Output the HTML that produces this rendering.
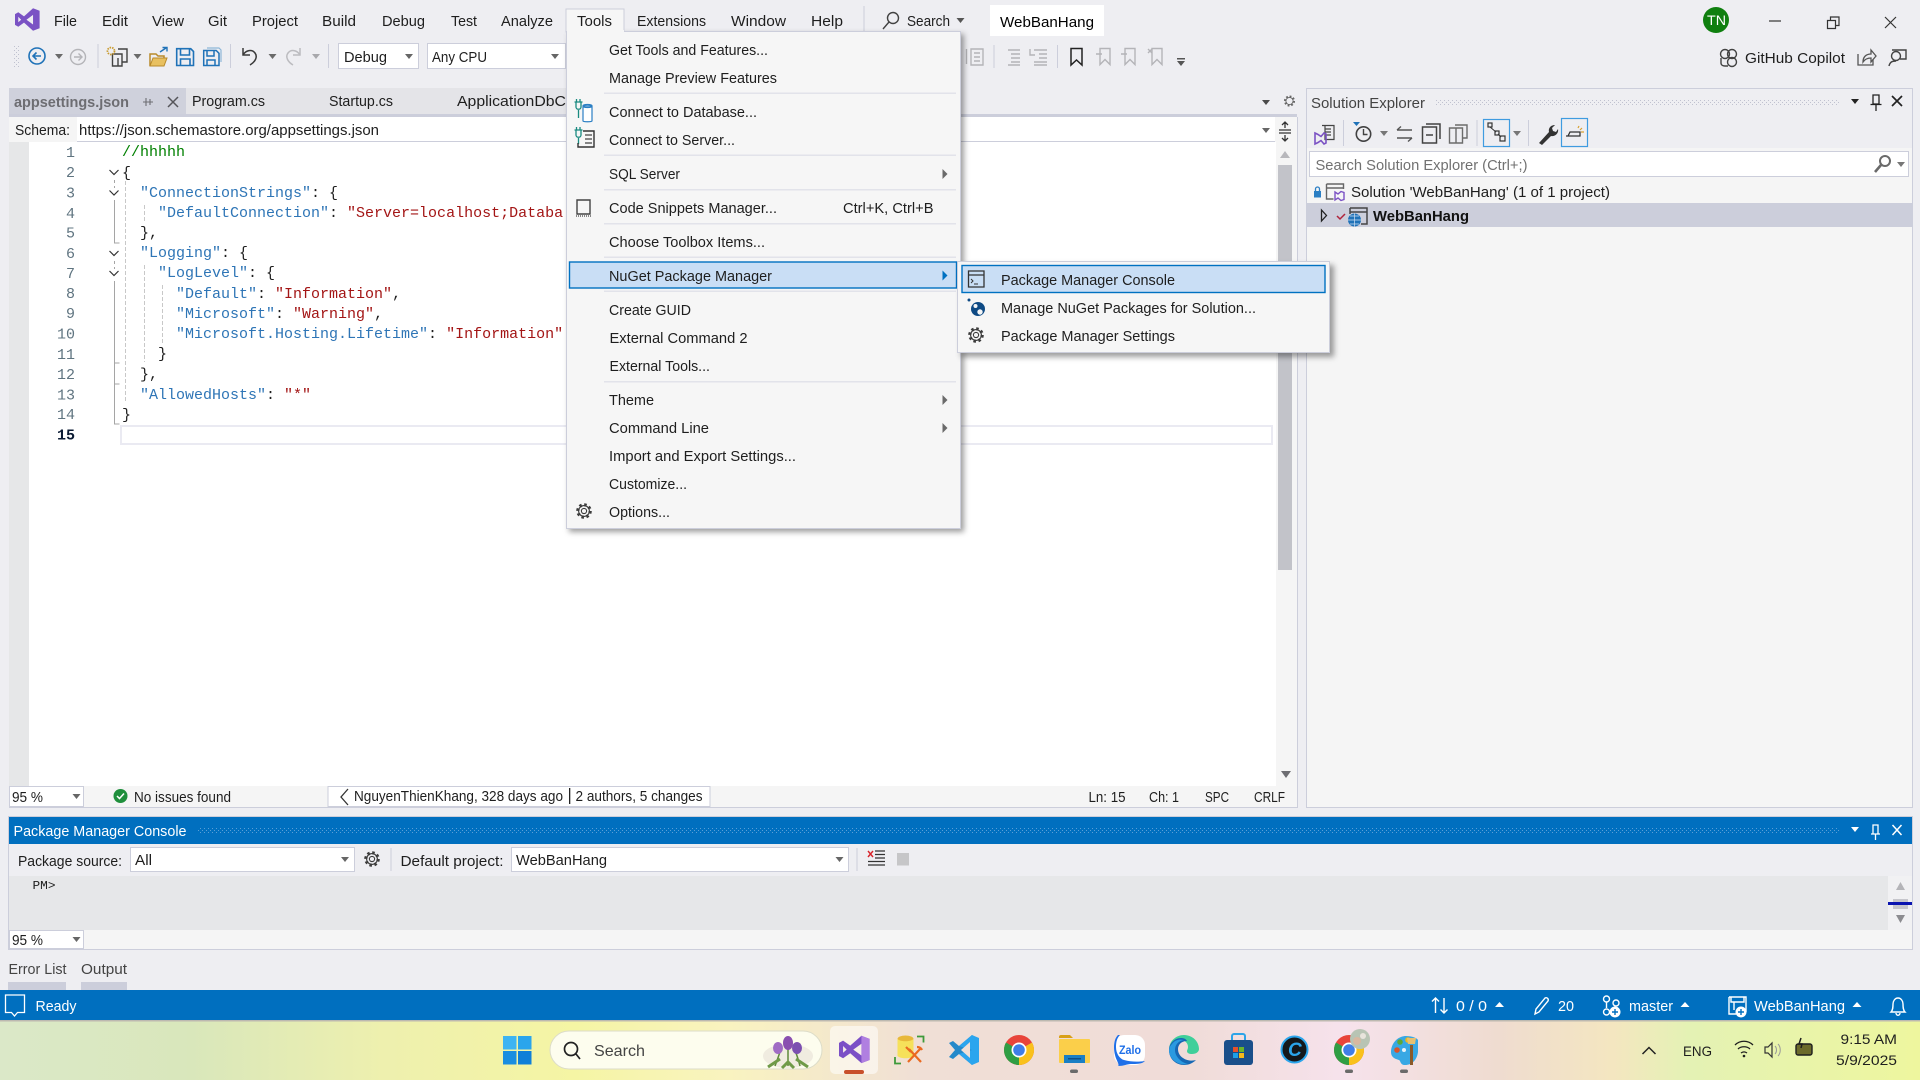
<!DOCTYPE html>
<html><head><meta charset="utf-8"><title>WebBanHang</title>
<style>
html,body{margin:0;padding:0;background:#eeeef2;overflow:hidden}
svg{display:block}
text{font-family:"Liberation Sans",sans-serif;font-size:15px;fill:#1e1e1e;white-space:pre}
.m{font-family:"Liberation Mono",monospace;font-size:15px;fill:#1e1e1e}
.k{fill:#2e75b6}.s{fill:#a31515}.ln{font-family:"Liberation Mono",monospace;font-size:15px;fill:#5f7480;text-anchor:end}
.w{fill:#fff}.g{fill:#444}
.ic{fill:none;stroke:#424242;stroke-width:1.4}
.ig{fill:none;stroke:#b4b4b8;stroke-width:1.4}
.ib{fill:none;stroke:#1f72b8;stroke-width:1.6}
.sep{stroke:#cccedb;stroke-width:1}
.iw{fill:none;stroke:#fff;stroke-width:1.4}
</style></head><body>
<svg xmlns="http://www.w3.org/2000/svg" width="1920" height="1080" viewBox="0 0 1920 1080">
<defs>
<path id="c" d="M-4 -2h8l-4 5z"/>
<path id="r" d="M-2.5 -5v10l5-5z"/>
<g id="gear"><circle r="6.2" fill="none" stroke="#3c3c3c" stroke-width="3.2" stroke-dasharray="2.4 2.47"/><circle r="5.4" fill="none" stroke="#3c3c3c" stroke-width="1.1"/><circle r="2.6" fill="none" stroke="#3c3c3c" stroke-width="1.1"/></g>
<pattern id="gr" width="4" height="4" patternUnits="userSpaceOnUse"><rect width="1" height="1" fill="#bfc1cf"/><rect x="2" y="2" width="1" height="1" fill="#bfc1cf"/></pattern>
<pattern id="grw" width="4" height="4" patternUnits="userSpaceOnUse"><rect width="1" height="1" fill="#5a9fd6"/><rect x="2" y="2" width="1" height="1" fill="#5a9fd6"/></pattern>
<linearGradient id="tb" x1="0" x2="1" y1="0" y2="0">
<stop offset="0" stop-color="#dbe8c8"/><stop offset=".1" stop-color="#d9e7bb"/><stop offset=".2" stop-color="#eef0ae"/><stop offset=".3" stop-color="#f5f5a4"/><stop offset=".38" stop-color="#f9f3c0"/><stop offset=".48" stop-color="#f0dfd6"/><stop offset=".62" stop-color="#f0dcd8"/><stop offset=".7" stop-color="#f6e2ec"/><stop offset=".78" stop-color="#efdcd0"/><stop offset=".84" stop-color="#f4e6c0"/><stop offset=".88" stop-color="#e4f2b4"/><stop offset="1" stop-color="#eef69e"/>
</linearGradient>
<filter id="sh" x="-10%" y="-10%" width="120%" height="120%"><feGaussianBlur stdDeviation="3"/></filter>
</defs>

<rect width="1920" height="1080" fill="#eeeef2"/>

<!-- title menu bar -->
<g transform="translate(15,6) scale(.82,.74)"><path d="M0 11 L4 8.500 L11 14 L22 3 L30 6.500 V30 L22 33.500 L11 22.500 L4 28 L0 25.500Z" fill="#7a52c4"/><path d="M22 12 V25 L14 18.500Z M4 14.500 V22 L7.500 18.500Z" fill="#eeeef2"/></g>
<text x="54" y="26" textLength="23" lengthAdjust="spacingAndGlyphs">File</text>
<text x="102" y="26" textLength="26" lengthAdjust="spacingAndGlyphs">Edit</text>
<text x="152" y="26" textLength="32" lengthAdjust="spacingAndGlyphs">View</text>
<text x="208" y="26" textLength="19" lengthAdjust="spacingAndGlyphs">Git</text>
<text x="252" y="26" textLength="46" lengthAdjust="spacingAndGlyphs">Project</text>
<text x="322" y="26" textLength="34" lengthAdjust="spacingAndGlyphs">Build</text>
<text x="382" y="26" textLength="43" lengthAdjust="spacingAndGlyphs">Debug</text>
<text x="451" y="26" textLength="26" lengthAdjust="spacingAndGlyphs">Test</text>
<text x="501" y="26" textLength="52" lengthAdjust="spacingAndGlyphs">Analyze</text>
<text x="637" y="26" textLength="69" lengthAdjust="spacingAndGlyphs">Extensions</text>
<text x="731" y="26" textLength="55" lengthAdjust="spacingAndGlyphs">Window</text>
<text x="811" y="26" textLength="32" lengthAdjust="spacingAndGlyphs">Help</text>
<line x1="864" y1="6" x2="864" y2="32" class="sep"/>
<circle cx="893" cy="18" r="5.500" class="ic"/><path d="M889 22l-6 7" class="ic"/>
<text x="907" y="26" textLength="43" lengthAdjust="spacingAndGlyphs">Search</text>
<use href="#c" x="960.500" y="20" fill="#555"/>
<rect x="990" y="5" width="114" height="31" fill="#fff"/>
<text x="1000" y="27" textLength="94" lengthAdjust="spacingAndGlyphs" style="fill:#000">WebBanHang</text>
<circle cx="1716" cy="20" r="13" fill="#0f7f0f"/>
<text x="1707" y="25" textLength="19" lengthAdjust="spacingAndGlyphs" class="w" style="font-size:14px">TN</text>
<path d="M1769 21h12" stroke="#333" stroke-width="1.2"/>
<path d="M1827.500 20.500h8v8h-8zM1830.500 20v-3h8.500v8.500h-3" fill="none" stroke="#333" stroke-width="1.2"/>
<path d="M1885 17l11 11M1896 17l-11 11" stroke="#333" stroke-width="1.2"/>

<!-- toolbar -->
<rect x="14" y="46" width="6" height="21" fill="url(#gr)"/>
<circle cx="37" cy="56" r="8" class="ib"/><path d="M41 56h-8m3.500-3.500L33 56l3.500 3.500" class="ib"/>
<use href="#c" x="59" y="56" fill="#6a6a6a"/>
<circle cx="78" cy="57" r="7.500" class="ig"/><path d="M74 57h8m-3.500-3.500L82 57l-3.500 3.500" class="ig"/>
<line x1="98" y1="44" x2="98" y2="68" class="sep"/>
<path d="M118 49h9v13h-5" class="ic"/><path d="M112.500 54h9.500v12h-9.500z" class="ic"/><path d="M118 58v8" class="ic"/>
<circle cx="111" cy="51" r="3.500" fill="none" stroke="#c99a2e" stroke-width="1.800" stroke-dasharray="1.500 1"/>
<use href="#c" x="137.500" y="56" fill="#6a6a6a"/>
<path d="M150 66V54h6l2 2h6v3" fill="none" stroke="#b98a2a" stroke-width="1.500"/><path d="M150 66l3-8h14l-3 8z" fill="#e8c060" stroke="#b98a2a" stroke-width="1"/>
<path d="M160 52l6-4m-3.500-.5H167v4" fill="none" stroke="#1f72b8" stroke-width="1.400"/>
<path d="M176.700 48.700h14l2.800 2.800v14h-16.800zM180.500 49v6h9v-6M180.500 65v-6h9.500v6" fill="none" stroke="#1f72b8" stroke-width="1.600"/>
<path d="M203.700 50.500h12.500l2.800 2.800v12.200H203.700zM207 51v5h7v-5M207 65v-5h8v5" fill="none" stroke="#1f72b8" stroke-width="1.500"/><path d="M207 48h12l2 2v12" fill="none" stroke="#8fb7d8" stroke-width="1.200"/>
<line x1="230.500" y1="44" x2="230.500" y2="68" class="sep"/>
<path d="M243 48v7h7M243 55c3-5 9-6 12-2 3 4 0 9-5 12" fill="none" stroke="#3a3a3a" stroke-width="1.500"/>
<use href="#c" x="272.500" y="56" fill="#6a6a6a"/>
<path d="M300 48v7h-7M300 55c-3-5-9-6-12-2-3 4 0 9 5 12" fill="none" stroke="#bcbcc0" stroke-width="1.500"/>
<use href="#c" x="316" y="56" fill="#a8a8ac"/>
<line x1="328.500" y1="44" x2="328.500" y2="68" class="sep"/>
<rect x="338.500" y="43.500" width="80" height="25" fill="#fff" stroke="#cccedb"/>
<text x="344" y="62" textLength="43" lengthAdjust="spacingAndGlyphs">Debug</text>
<use href="#c" x="409" y="56" fill="#666"/>
<rect x="427.500" y="43.500" width="138" height="25" fill="#fff" stroke="#cccedb"/>
<text x="432" y="62" textLength="55" lengthAdjust="spacingAndGlyphs">Any CPU</text>
<use href="#c" x="555" y="56" fill="#666"/>

<g class="ig">
<path d="M966.500 49v15M971 49h12v16h-12zM974 53h6M974 57h6M974 61h6"/>
<line x1="994" y1="45" x2="994" y2="68" style="stroke:#cccedb;stroke-width:1"/>
<path d="M1008 50h12M1011 54h9M1011 58h9M1011 62h9M1008 65h12"/>
<path d="M1034 50h13M1039 54h8M1039 58h8M1034 62h13M1034 65h13M1030 49v6h5"/>
<line x1="1057.500" y1="45" x2="1057.500" y2="68" style="stroke:#cccedb;stroke-width:1"/>
</g>
<path d="M1071 48.500h11v16.500l-5.500-5-5.500 5z" fill="none" stroke="#222" stroke-width="1.500"/>
<path d="M1100 48.500h10v16l-5-5-5 5z M1096 54h6" class="ig"/>
<path d="M1125 48.500h10v16l-5-5-5 5z M1121 54h6" class="ig"/>
<path d="M1152 48.500h10v16l-5-5-5 5z M1148 49l4 4M1152 49l-4 4" class="ig"/>
<rect x="1177" y="58" width="8" height="1.500" fill="#555"/><use href="#c" x="1181" y="63" fill="#555"/>

<!-- copilot -->
<circle cx="1725" cy="54" r="4.500" class="ic"/><circle cx="1732" cy="54" r="4.500" class="ic"/><path d="M1721 58v5c0 2 2 3 4 3h3" class="ic"/><circle cx="1732" cy="62" r="4.500" class="ic"/>
<text x="1745" y="63" textLength="100" lengthAdjust="spacingAndGlyphs">GitHub Copilot</text>
<path d="M1858 54v11h15v-6M1863 62c0-5 3-8 8-8v-4l5 6-5 6v-4c-3 0-6 1-8 4z" fill="none" stroke="#555" stroke-width="1.300"/>
<circle cx="1896" cy="56" r="4.500" class="ic"/><path d="M1889 66c1-4 3-5 7-5" class="ic"/><path d="M1892 50h14v9h-6" class="ic"/>

<!-- tab strip -->
<rect x="186" y="88" width="380" height="29" fill="#e4e4e8"/>
<rect x="9" y="88" width="177" height="29" fill="#cfd1dc"/>
<text x="14" y="107" textLength="115" lengthAdjust="spacingAndGlyphs" style="font-weight:bold;fill:#6d6d72">appsettings.json</text>
<path d="M146 98v8M146 102h7M150 99v6M143 102h3" stroke="#6d6d72" stroke-width="1.100" fill="none"/>
<path d="M168 97l10 10M178 97l-10 10" stroke="#55555a" stroke-width="1.500"/>
<text x="192" y="106" textLength="73" lengthAdjust="spacingAndGlyphs">Program.cs</text>
<text x="329" y="106" textLength="64" lengthAdjust="spacingAndGlyphs">Startup.cs</text>
<text x="457" y="106" textLength="152" lengthAdjust="spacingAndGlyphs">ApplicationDbContext</text>
<rect x="9" y="114" width="1288" height="3" fill="#cccedb"/>
<use href="#c" x="1266" y="102" fill="#4a4a4a"/>
<g transform="translate(1289.500,101) scale(.72)"><circle r="6" fill="none" stroke="#666" stroke-width="3.400" stroke-dasharray="2.400 2.300"/><circle r="5" fill="none" stroke="#666" stroke-width="1.200"/></g>

<!-- schema bar -->
<rect x="9" y="117" width="1288" height="25" fill="#f5f5f5"/>
<rect x="77" y="117" width="1198" height="24" fill="#fff"/>
<rect x="77" y="141" width="1198" height="1" fill="#cccedb"/>
<text x="15" y="135" textLength="55" lengthAdjust="spacingAndGlyphs">Schema:</text>
<text x="79" y="135" textLength="300" lengthAdjust="spacingAndGlyphs">https://json.schemastore.org/appsettings.json</text>
<use href="#c" x="1266" y="130" fill="#666"/>
<path d="M1285 122v6m-3-3l3-3 3 3M1279 130h12M1279 133h12M1285 135v6m-3-3l3 3 3-3" fill="none" stroke="#333" stroke-width="1.300"/>

<!-- editor -->
<rect x="9" y="142" width="1267" height="644" fill="#fff"/>
<rect x="9" y="142" width="20" height="644" fill="#e6e7e8"/>
<rect x="1276" y="142" width="21" height="644" fill="#f5f5f5"/>
<rect x="1278" y="165" width="14" height="405" fill="#c2c3c9"/>
<path d="M1285 151l5 7h-10z" fill="#b8b8bc"/><path d="M1286 778l5-7h-10z" fill="#6e6e72"/>
<rect x="121" y="426" width="1151" height="18" fill="#fff" stroke="#eaeaf2" stroke-width="2"/>

<text class="ln" x="75" y="157">1</text>
<text class="ln" x="75" y="177">2</text>
<text class="ln" x="75" y="197.500">3</text>
<text class="ln" x="75" y="218">4</text>
<text class="ln" x="75" y="237.500">5</text>
<text class="ln" x="75" y="258">6</text>
<text class="ln" x="75" y="278">7</text>
<text class="ln" x="75" y="298">8</text>
<text class="ln" x="75" y="318">9</text>
<text class="ln" x="75" y="338.500">10</text>
<text class="ln" x="75" y="359">11</text>
<text class="ln" x="75" y="379">12</text>
<text class="ln" x="75" y="399.500">13</text>
<text class="ln" x="75" y="419">14</text>
<text class="ln" x="75" y="439.500" style="fill:#0a1a33;font-weight:bold">15</text>

<g fill="none" stroke="#333" stroke-width="1.200">
<path d="M109.500 170l4.500 4.500 4.500-4.500M109.500 190.500l4.500 4.500 4.500-4.500M109.500 251l4.500 4.500 4.500-4.500M109.500 271l4.500 4.500 4.500-4.500"/>
</g>
<g fill="none" stroke="#a5a5a5" stroke-width="1">
<path d="M114.500 200v43h5M114.500 281v82h5M114.500 363v21h5M114.500 384v40h5"/>
<path d="M114.500 180v8M114.500 261v8" stroke-dasharray="3 3"/>
<path d="M125.500 181v222M144.500 205v18M144.500 265v97M162.500 285v60" stroke="#c8c8c8" stroke-dasharray="4 2"/>
</g>

<text class="m" x="122" y="156" style="fill:#008000">//hhhhh</text>
<text class="m" x="122" y="177">{</text>
<text class="m" x="140" y="197"><tspan class="k">"ConnectionStrings"</tspan>: {</text>
<text class="m" x="158" y="217"><tspan class="k">"DefaultConnection"</tspan>: <tspan class="s">"Server=localhost;Databa</tspan></text>
<text class="m" x="140" y="237">},</text>
<text class="m" x="140" y="257"><tspan class="k">"Logging"</tspan>: {</text>
<text class="m" x="158" y="277"><tspan class="k">"LogLevel"</tspan>: {</text>
<text class="m" x="176" y="298"><tspan class="k">"Default"</tspan>: <tspan class="s">"Information"</tspan>,</text>
<text class="m" x="176" y="318"><tspan class="k">"Microsoft"</tspan>: <tspan class="s">"Warning"</tspan>,</text>
<text class="m" x="176" y="338"><tspan class="k">"Microsoft.Hosting.Lifetime"</tspan>: <tspan class="s">"Information"</tspan></text>
<text class="m" x="158" y="358">}</text>
<text class="m" x="140" y="378.500">},</text>
<text class="m" x="140" y="399"><tspan class="k">"AllowedHosts"</tspan>: <tspan class="s">"*"</tspan></text>
<text class="m" x="122" y="419">}</text>

<!-- editor status -->
<rect x="9" y="786" width="1288" height="21" fill="#f5f5f5"/>
<rect x="9" y="807" width="1288" height="1" fill="#cccedb"/>
<rect x="1297" y="117" width="1" height="691" fill="#cccedb"/>
<rect x="9.500" y="786.500" width="74" height="20" fill="#fff" stroke="#cccedb"/>
<text x="12" y="802" textLength="31" lengthAdjust="spacingAndGlyphs">95 %</text>
<use href="#c" x="76.500" y="796" fill="#666"/>
<circle cx="120.500" cy="796" r="7" fill="#1f8f3c"/><path d="M117 796l2.500 2.500 4.500-5" fill="none" stroke="#fff" stroke-width="1.500"/>
<text x="134" y="802" textLength="97" lengthAdjust="spacingAndGlyphs">No issues found</text>
<rect x="328" y="786.500" width="382" height="20" fill="#fff" stroke="#cccedb"/>
<path d="M348 789l-7 8 7 8" fill="none" stroke="#333" stroke-width="1.300"/>
<text x="354" y="801" textLength="209" lengthAdjust="spacingAndGlyphs">NguyenThienKhang, 328 days ago</text>
<rect x="569" y="788" width="1.300" height="16" fill="#222"/>
<text x="575.500" y="801" textLength="127" lengthAdjust="spacingAndGlyphs">2 authors, 5 changes</text>
<text x="1088.500" y="802" textLength="37" lengthAdjust="spacingAndGlyphs">Ln: 15</text>
<text x="1149" y="802" textLength="30" lengthAdjust="spacingAndGlyphs">Ch: 1</text>
<text x="1205" y="802" textLength="24" lengthAdjust="spacingAndGlyphs">SPC</text>
<text x="1254" y="802" textLength="31" lengthAdjust="spacingAndGlyphs">CRLF</text>

<!-- solution explorer -->
<rect x="1306.500" y="88.500" width="606" height="719" fill="#f5f5f5" stroke="#cccedb"/>
<rect x="1307" y="89" width="605" height="29" fill="#eeeef2"/>
<rect x="1307" y="118" width="605" height="30" fill="#eeeef2"/>
<text x="1311" y="108" textLength="114" lengthAdjust="spacingAndGlyphs" style="fill:#444">Solution Explorer</text>
<rect x="1435" y="99" width="404" height="7" fill="url(#gr)"/>
<use href="#c" x="1855" y="101" fill="#222"/>
<path d="M1873 95h6v9h-6zM1870.500 104.500h11M1876 105v6" fill="none" stroke="#222" stroke-width="1.300"/>
<path d="M1892 96l10 10M1902 96l-10 10" stroke="#222" stroke-width="1.700"/>

<path d="M1322 125.500h12v14h-9v-14M1325 129h6M1325 132h6M1325 135h6" fill="none" stroke="#444" stroke-width="1.200"/>
<path d="M1315 133l3 1.500 3 2 3-3.500 2 1v9l-2 1-3-3.500-3 2-3 1.500z" fill="none" stroke="#7b52c4" stroke-width="1.600"/>
<line x1="1343.500" y1="120" x2="1343.500" y2="146" class="sep"/>
<path d="M1353 122h7l-3.500 4z" fill="#1f72b8"/>
<circle cx="1363.500" cy="134" r="7.200" fill="none" stroke="#424242" stroke-width="1.600"/><path d="M1363.500 129v5.500h4" class="ic"/>
<use href="#c" x="1384" y="133" fill="#777"/>
<path d="M1397 130h15M1397 130l4-3.500M1412 138h-15M1412 138l-4 3.500" fill="none" stroke="#555" stroke-width="1.400"/>
<path d="M1426 124h14v15M1422.500 127h14v16h-14zM1426 135h7" fill="none" stroke="#424242" stroke-width="1.500"/>
<path d="M1455 125h12v13h-4M1449.500 128h13v15h-13zM1456 128v15" fill="none" stroke="#6b6b6b" stroke-width="1.400"/>
<line x1="1477" y1="120" x2="1477" y2="146" class="sep"/>
<rect x="1483.500" y="119.500" width="26" height="27" fill="none" stroke="#3f9be0" stroke-width="1.200"/>
<path d="M1490 127l6 5M1498 134l3 3" stroke="#333"/><rect x="1488" y="123" width="4" height="4" fill="none" stroke="#333" stroke-width="1.200"/><rect x="1495" y="131" width="4" height="4" fill="none" stroke="#333" stroke-width="1.200"/><rect x="1500" y="136" width="5" height="5" fill="none" stroke="#333" stroke-width="1.200"/>
<use href="#c" x="1517" y="133" fill="#777"/>
<line x1="1528.500" y1="120" x2="1528.500" y2="146" class="sep"/>
<path d="M1539 143l10-11c-1-4 2-7 6-7l-3 3 1 3 3 1 2-3c1 4-3 8-7 7l-9 9z" fill="#333"/>
<rect x="1561.500" y="118.500" width="26" height="28" fill="none" stroke="#3f9be0" stroke-width="1.200"/>
<path d="M1568 136l2-4h10v4z M1566 136h14" fill="none" stroke="#333" stroke-width="1.300"/><path d="M1582 128l-2 2M1584 132h-3M1579 126l-1 2" stroke="#d8a030" stroke-width="1.200"/>

<rect x="1309.500" y="151.500" width="599" height="25" fill="#fff" stroke="#cccedb"/>
<text x="1315.500" y="170" textLength="212" lengthAdjust="spacingAndGlyphs" style="fill:#717171">Search Solution Explorer (Ctrl+;)</text>
<circle cx="1885" cy="161" r="5" fill="none" stroke="#6a6a6a" stroke-width="2"/><path d="M1881 165l-6 7" stroke="#6a6a6a" stroke-width="2.600"/>
<use href="#c" x="1901" y="164" fill="#777"/>

<rect x="1307" y="178" width="605" height="25" fill="#f5f5f5"/>
<rect x="1307" y="203" width="605" height="24" fill="#cccedb"/>
<rect x="1314" y="191" width="7" height="6.500" fill="#2b7fc4"/><path d="M1315.500 191v-2a2 2 0 0 1 4 0v2" fill="none" stroke="#2b7fc4" stroke-width="1.300"/>
<path d="M1326.500 184h17v5M1326.500 184v15h7M1326.500 188h17" fill="none" stroke="#666" stroke-width="1.400"/>
<path d="M1335 192l3 2 3-2.500 3 1v7l-3 1-3-2.500-3 2z" fill="none" stroke="#7b52c4" stroke-width="1.400"/>
<text x="1351" y="197" textLength="259" lengthAdjust="spacingAndGlyphs">Solution 'WebBanHang' (1 of 1 project)</text>
<path d="M1321.500 210l5 5.500-5 5.500z" fill="none" stroke="#222" stroke-width="1.300"/>
<path d="M1337 216l3 3 5-5" fill="none" stroke="#b0243c" stroke-width="1.500"/>
<path d="M1350 208h17v16h-6M1350 212h17M1350 208v6" fill="none" stroke="#444" stroke-width="1.500"/>
<circle cx="1354.500" cy="220" r="6.500" fill="#1f72b8"/><path d="M1348 220h13M1354.500 213.500v13M1350 216h9M1350 224h9" stroke="#cfe0f2" stroke-width=".7" fill="none"/>
<text x="1373" y="221" textLength="96" lengthAdjust="spacingAndGlyphs" style="font-weight:bold;fill:#111">WebBanHang</text>

<!-- package manager console -->
<rect x="8.500" y="816" width="1904" height="1" fill="#cccedb"/>
<rect x="9" y="817" width="1903" height="27" fill="#006fbf"/>
<text x="13.500" y="836" textLength="173" lengthAdjust="spacingAndGlyphs" class="w">Package Manager Console</text>
<rect x="197" y="827" width="1642" height="7" fill="url(#grw)"/>
<use href="#c" x="1855" y="829" fill="#fff"/>
<path d="M1873 825h5v9h-5zM1871 834h9M1875.500 834v6" fill="none" stroke="#fff" stroke-width="1.300"/>
<path d="M1892.500 825l9 10M1901.500 825l-9 10" stroke="#fff" stroke-width="1.500"/>
<rect x="130.500" y="847.500" width="224" height="24" fill="#fff" stroke="#cccedb"/>
<text x="18" y="866" textLength="104" lengthAdjust="spacingAndGlyphs">Package source:</text>
<text x="135" y="865" textLength="17" lengthAdjust="spacingAndGlyphs">All</text>
<use href="#c" x="345" y="859" fill="#666"/>
<use href="#gear" x="372" y="859"/>
<line x1="391" y1="848" x2="391" y2="871" class="sep"/>
<text x="400.500" y="866" textLength="103" lengthAdjust="spacingAndGlyphs">Default project:</text>
<rect x="511.500" y="847.500" width="337" height="24" fill="#fff" stroke="#cccedb"/>
<text x="516" y="865" textLength="91" lengthAdjust="spacingAndGlyphs">WebBanHang</text>
<use href="#c" x="839.500" y="859" fill="#666"/>
<line x1="857" y1="848" x2="857" y2="871" class="sep"/>
<path d="M868 851l5 6M873 851l-5 6" stroke="#d8232a" stroke-width="1.400"/>
<path d="M875 851h10M875 854.500h10M875 858h10M868 861.500h17M868 865h17" stroke="#333" stroke-width="1.300"/>
<rect x="897" y="853" width="12" height="12.500" fill="#c6c6c8"/>
<rect x="9" y="876" width="1879" height="54" fill="#e6e7e9"/>
<rect x="1888" y="876" width="24" height="54" fill="#f1f1f3"/>
<text x="32.500" y="889" textLength="23" lengthAdjust="spacingAndGlyphs" style="font-size:12px;font-family:'Liberation Mono',monospace">PM&gt;</text>
<path d="M1900.500 882l4.500 8h-9z" fill="#b4b4b8"/><path d="M1900.500 923l4.500-8h-9z" fill="#8c8c90"/>
<rect x="1893" y="899" width="15" height="10" fill="#c6c6cc"/>
<rect x="1888" y="902" width="24" height="3" fill="#0a14b0"/>
<rect x="9" y="930" width="1903" height="19" fill="#f5f5f5"/>
<rect x="8" y="949" width="1905" height="1" fill="#cccedb"/>
<rect x="1912" y="816" width="1" height="134" fill="#cccedb"/>
<rect x="8" y="816" width="1" height="134" fill="#cccedb"/>
<rect x="9.500" y="930.500" width="74" height="18" fill="#fff" stroke="#cccedb"/>
<text x="12" y="945" textLength="31" lengthAdjust="spacingAndGlyphs">95 %</text>
<use href="#c" x="76.500" y="939" fill="#666"/>

<text x="8.500" y="974" textLength="58" lengthAdjust="spacingAndGlyphs" class="g">Error List</text>
<text x="81" y="974" textLength="46" lengthAdjust="spacingAndGlyphs" class="g">Output</text>
<rect x="8" y="982" width="58" height="8" fill="#cccedb"/>
<rect x="81" y="982" width="46" height="8" fill="#cccedb"/>

<!-- status bar -->
<rect x="0" y="990" width="1920" height="30" fill="#006fbf"/>
<path d="M5.500 995h19v17.500h-7l-3 3.500-3-3.500h-6z" fill="none" stroke="#fff" stroke-width="1.300"/>
<text x="35.500" y="1011" textLength="41" lengthAdjust="spacingAndGlyphs" class="w">Ready</text>
<path d="M1435.500 1013v-15m-3.500 3.500l3.500-3.500 3.500 3.500M1444 998v15m-3.500-3.500l3.500 3.500 3.500-3.500" class="iw"/>
<text x="1456" y="1011" textLength="31" lengthAdjust="spacingAndGlyphs" class="w">0 / 0</text>
<path d="M1499.500 1002l4.500 5h-9z" fill="#fff"/>
<path d="M1535 1014l1-5 9-11c2-1 4 1 3 3l-9 11z" class="iw"/>
<text x="1558" y="1011" textLength="16" lengthAdjust="spacingAndGlyphs" class="w">20</text>
<circle cx="1606.500" cy="999" r="3" class="iw"/><path d="M1606.500 1002v6" class="iw"/><circle cx="1606.500" cy="1012" r="3" class="iw"/><circle cx="1616" cy="1003" r="3" class="iw"/><circle cx="1615" cy="1012" r="5.500" fill="#fff"/><path d="M1612 1012h6M1615 1009v6" stroke="#006fbf" stroke-width="1.400"/>
<text x="1629" y="1011" textLength="44" lengthAdjust="spacingAndGlyphs" class="w">master</text>
<path d="M1685 1002l4.500 5h-9z" fill="#fff"/>
<path d="M1729 997h17v15M1729 997v17h7M1731 997v5h13v-5M1734 1002v8" class="iw"/><circle cx="1741" cy="1012" r="5.500" fill="#fff"/><path d="M1738 1012h6M1741 1009v6" stroke="#006fbf" stroke-width="1.400"/>
<text x="1754" y="1011" textLength="91" lengthAdjust="spacingAndGlyphs" class="w">WebBanHang</text>
<path d="M1857 1002l4.500 5h-9z" fill="#fff"/>
<path d="M1891 1012c2-2 2-5 2-8 0-3 2-6 5-6s5 3 5 6c0 3 0 6 2 8zM1896 1013c0 3 4 3 4 0" class="iw"/>

<!-- taskbar -->
<rect x="0" y="1020" width="1920" height="60" fill="url(#tb)"/>
<rect x="0" y="1020" width="1920" height="1.500" fill="#bdb9b0"/>
<g><rect x="503" y="1036" width="13.500" height="13.500" fill="#3db4f2"/><rect x="518" y="1036" width="13.500" height="13.500" fill="#2aa5ec"/><rect x="503" y="1051" width="13.500" height="13.500" fill="#1a8ee0"/><rect x="518" y="1051" width="13.500" height="13.500" fill="#0f7fd8"/></g>
<rect x="550" y="1031" width="272" height="38" rx="19" fill="#fdfdee" stroke="#dcdcc8" stroke-width="1"/>
<circle cx="571" cy="1049" r="6.500" fill="none" stroke="#222" stroke-width="1.700"/><path d="M576 1054l4 5" stroke="#222" stroke-width="1.700"/>
<text x="594" y="1056" textLength="51" lengthAdjust="spacingAndGlyphs" style="fill:#444;font-size:16px">Search</text>
<g><ellipse cx="788" cy="1056" rx="25" ry="12" fill="#f0ece0"/><path d="M775 1066c3-8 5-14 7-20M788 1066v-24M800 1066c-2-8-4-14-7-20" stroke="#5f8a3a" stroke-width="1.500" fill="none"/><path d="M768 1067l12-8M808 1067l-12-8M782 1068l6-6 6 6" stroke="#6f9a48" stroke-width="3" fill="none"/><ellipse cx="788" cy="1043" rx="5" ry="7" fill="#8a4fb0"/><ellipse cx="778" cy="1048" rx="5" ry="6" fill="#a06bc4"/><ellipse cx="797" cy="1048" rx="5" ry="6" fill="#7c4fb0"/></g>
<rect x="830" y="1026" width="48" height="48" rx="5" fill="#fff" fill-opacity=".55"/>
<g transform="translate(839,1033) scale(1.020,.9)"><path d="M0 11 L4 8.500 L11 14 L22 3 L30 6.500 V30 L22 33.500 L11 22.500 L4 28 L0 25.500Z" fill="#7b4fc6"/><path d="M22 12 V25 L14 18.500Z M4 14.500 V22 L7.500 18.500Z" fill="#f6efe8"/><path d="M22 3L30 6.500V30L22 33.500z" fill="#b07fe0"/></g>
<rect x="844" y="1070" width="20" height="4" rx="2" fill="#c8502a"/>
<!-- toolbox icon -->
<ellipse cx="905.500" cy="1039" rx="8" ry="3.500" fill="#e8b83a"/><path d="M897.500 1039v17c3 3 13 3 16 0v-17c-3 3-13 3-16 0z" fill="#f6e15a"/>
<path d="M917 1036.500h6.500v6M895 1057v6.500h6" fill="none" stroke="#3e9a3a" stroke-width="1.800"/>
<path d="M908 1062l12-13M921 1062l-12-13M917 1047c2 0 4 1 5 3M906 1047l5 5" stroke="#ea6a20" stroke-width="2.200" fill="none"/>
<!-- vscode -->
<path d="M972 1035l-13 11-6-5-4 2 6 7-6 7 4 2 6-5 13 11 1-1v-28z" fill="#2489ca"/>
<path d="M972 1035l-13 11 13 4-13 4 13 11 7-3v-24z" fill="#2ba5ee"/>
<path d="M970 1042l-9 8 9 8z" fill="#f0dfd6"/>
<!-- chrome -->
<circle cx="1019" cy="1050" r="15" fill="#e8443a"/>
<path d="M1019 1050L1032 1042.500A15 15 0 0 1 1019 1065z" fill="#f9c11c"/>
<path d="M1019 1050L1019 1065A15 15 0 0 1 1006 1042.500z" fill="#2f9e44"/>
<circle cx="1019" cy="1050" r="7.500" fill="#fff"/><circle cx="1019" cy="1050" r="5.800" fill="#3f7ee8"/>
<!-- folder -->
<path d="M1059 1037a2 2 0 0 1 2-2h9l3 3h-14z" fill="#d8a018"/>
<rect x="1059" y="1039" width="31" height="24" rx="1" fill="#fbcf4a"/>
<rect x="1064" y="1055" width="21" height="8" fill="#1a7fc4"/><rect x="1068" y="1058" width="13" height="1.500" fill="#0c4f88"/>
<rect x="1070" y="1069.500" width="8" height="3.500" rx="1.750" fill="#6a6a6a"/>
<!-- zalo -->
<rect x="1114" y="1035" width="31" height="30" rx="10" fill="#fff"/>
<path d="M1118 1035c-4 4-5 12-3 20 1 5 5 10 3 11 6 0 9-2 13-2 6 0 11 0 14-3-6 1-14 1-21-1-4-1-8-6-8-13 0-5 1-9 4-12z" fill="#1e6fe8"/>
<text x="1119" y="1054" textLength="22" lengthAdjust="spacingAndGlyphs" style="fill:#1e6fe8;font-size:12px;font-weight:bold">Zalo</text>
<!-- edge -->
<path d="M1169 1050c0-9 7-15 15-15 9 0 15 7 15 14 0 3-3 5-7 5-3 0-5-1-5-3 0-1 1-2 1-4 0-4-3-7-8-7-6 0-11 5-11 10z" fill="#3fcf9a"/>
<path d="M1169 1050c0 9 7 15 15 15 5 0 9-2 12-5-3 1-9 1-13-2-3-2-5-5-5-9 0-4 3-8 9-8-1-2-3-3-6-3-7 0-12 6-12 12z" fill="#1668b4"/>
<path d="M1172 1044c3-4 7-5 12-4-6 1-9 5-9 10 0 6 5 12 13 14-10 2-19-5-19-14 0-2 1-4 3-6z" fill="#2a9ae0"/>
<!-- store -->
<rect x="1224" y="1040" width="29" height="25" rx="3" fill="#1a4f8a"/><path d="M1232 1040v-4c0-1 1-2 2-2h9c1 0 2 1 2 2v4" fill="none" stroke="#2ea4e8" stroke-width="2"/>
<rect x="1233" y="1047" width="5" height="5" fill="#e8512a"/><rect x="1239" y="1047" width="5" height="5" fill="#6cb52a"/><rect x="1233" y="1053" width="5" height="5" fill="#1ea0e8"/><rect x="1239" y="1053" width="5" height="5" fill="#f5b81a"/>
<!-- C -->
<circle cx="1294.500" cy="1049.500" r="13" fill="#14181c" stroke="#2ba5ec" stroke-width="2"/>
<text x="1288" y="1056" style="fill:#2ba5ec;font-size:19px;font-weight:bold;font-style:italic">C</text>
<!-- chrome 2 -->
<circle cx="1349" cy="1050" r="15" fill="#e8443a"/>
<path d="M1349 1050L1362 1042.500A15 15 0 0 1 1349 1065z" fill="#f9c11c"/>
<path d="M1349 1050L1349 1065A15 15 0 0 1 1336 1042.500z" fill="#2f9e44"/>
<circle cx="1349" cy="1050" r="7.500" fill="#fff"/><circle cx="1349" cy="1050" r="5.800" fill="#3f7ee8"/>
<circle cx="1360" cy="1039" r="10" fill="#b8c4b4"/><circle cx="1357" cy="1041" r="4" fill="#d8b8a0"/><circle cx="1363" cy="1036" r="3" fill="#e8e4dc"/>
<rect x="1345" y="1069.500" width="8" height="3.500" rx="1.750" fill="#6a6a6a"/>
<!-- paint -->
<path d="M1391 1052c0-9 7-16 15-16 6 0 11 2 12 4v12c-1 8-6 13-13 13-5 0-4-4-6-5-3-1-8-2-8-8z" fill="#38a8e4"/>
<circle cx="1397" cy="1050" r="2.800" fill="#d8542a"/><circle cx="1400" cy="1042" r="2.800" fill="#5aa83a"/><circle cx="1408" cy="1040" r="2.800" fill="#f0b81a"/><circle cx="1404" cy="1050" r="2" fill="#e6f3fa"/>
<rect x="1410" y="1045" width="3" height="20" fill="#8a5a2a"/><path d="M1408 1044h7l1-6h-9z" fill="#e8c070"/>
<rect x="1400" y="1069.500" width="8" height="3.500" rx="1.750" fill="#6a6a6a"/>
<!-- tray -->
<path d="M1642.500 1054l6.500-6.500 6.500 6.500" fill="none" stroke="#222" stroke-width="1.500"/>
<text x="1683" y="1056" textLength="29" lengthAdjust="spacingAndGlyphs" style="font-size:14px">ENG</text>
<path d="M1735 1045c5-5 13-5 18 0M1738 1049c3-3 9-3 12 0M1741 1053c2-1.500 4-1.500 6 0" fill="none" stroke="#1e1e1e" stroke-width="1.300"/><circle cx="1744" cy="1056" r="1.300" fill="#1e1e1e"/>
<path d="M1765 1047h3l4-4v14l-4-4h-3z" fill="none" stroke="#333" stroke-width="1.200"/><path d="M1775 1046c2 2 2 6 0 8M1778 1044c3 3 3 9 0 12" fill="none" stroke="#999" stroke-width="1"/>
<rect x="1796" y="1044" width="16" height="11" rx="2" fill="#6b6a2a" stroke="#1e1e1e" stroke-width="1.400"/><path d="M1801 1038l-2 6 3 0-1 4" fill="none" stroke="#1e1e1e" stroke-width="1.500"/>
<text x="1840.500" y="1044" textLength="56.500" lengthAdjust="spacingAndGlyphs" style="font-size:14px">9:15 AM</text>
<text x="1836" y="1065" textLength="61" lengthAdjust="spacingAndGlyphs" style="font-size:14px">5/9/2025</text>

<!-- Tools menu -->
<rect x="569" y="34" width="395" height="498" fill="#000" fill-opacity=".38" filter="url(#sh)"/>
<rect x="566" y="9" width="58" height="23" fill="#f6f6f6" stroke="#cccedb"/>
<rect x="566.500" y="31.500" width="394" height="497" fill="#f6f6f6" stroke="#cccedb"/>
<rect x="567" y="30" width="57" height="3" fill="#f6f6f6"/>
<text x="577" y="26" textLength="35" lengthAdjust="spacingAndGlyphs">Tools</text>
<g fill="#e2e3ea">
<rect x="604" y="92.500" width="352" height="1.500"/><rect x="604" y="154.500" width="352" height="1.500"/><rect x="604" y="189" width="352" height="1.500"/><rect x="604" y="223" width="352" height="1.500"/><rect x="604" y="256.500" width="352" height="1.500"/><rect x="604" y="290.500" width="352" height="1.500"/><rect x="604" y="381" width="352" height="1.500"/>
</g>
<rect x="569.500" y="262" width="387" height="26" fill="#c9def5" stroke="#0071c1" stroke-width="1.400"/>
<text x="609" y="55" textLength="159" lengthAdjust="spacingAndGlyphs">Get Tools and Features...</text>
<text x="609" y="83" textLength="168" lengthAdjust="spacingAndGlyphs">Manage Preview Features</text>
<text x="609" y="117" textLength="148" lengthAdjust="spacingAndGlyphs">Connect to Database...</text>
<text x="609" y="145" textLength="126" lengthAdjust="spacingAndGlyphs">Connect to Server...</text>
<text x="609" y="179" textLength="71" lengthAdjust="spacingAndGlyphs">SQL Server</text>
<text x="609" y="213" textLength="168" lengthAdjust="spacingAndGlyphs">Code Snippets Manager...</text>
<text x="843" y="213" textLength="90.500" lengthAdjust="spacingAndGlyphs">Ctrl+K, Ctrl+B</text>
<text x="609" y="247" textLength="156" lengthAdjust="spacingAndGlyphs">Choose Toolbox Items...</text>
<text x="609" y="281" textLength="163" lengthAdjust="spacingAndGlyphs">NuGet Package Manager</text>
<text x="609" y="315" textLength="82" lengthAdjust="spacingAndGlyphs">Create GUID</text>
<text x="609.500" y="343" textLength="138" lengthAdjust="spacingAndGlyphs">External Command 2</text>
<text x="609.500" y="371" textLength="100.500" lengthAdjust="spacingAndGlyphs">External Tools...</text>
<text x="609" y="405" textLength="45" lengthAdjust="spacingAndGlyphs">Theme</text>
<text x="609" y="433" textLength="100" lengthAdjust="spacingAndGlyphs">Command Line</text>
<text x="609" y="461" textLength="187" lengthAdjust="spacingAndGlyphs">Import and Export Settings...</text>
<text x="609" y="489" textLength="78" lengthAdjust="spacingAndGlyphs">Customize...</text>
<text x="609" y="517" textLength="61" lengthAdjust="spacingAndGlyphs">Options...</text>
<use href="#r" x="945" y="174" fill="#6a6a6a"/><use href="#r" x="945" y="275.500" style="fill:#0071c1"/><use href="#r" x="945" y="400" fill="#6a6a6a"/><use href="#r" x="945" y="428" fill="#6a6a6a"/>
<path d="M576 102v5c0 3 5 3 5 0v-5zM574.500 102h8M576.500 102v-3M580 102v-3M578.500 110v8" fill="none" stroke="#1a8a80" stroke-width="1.300"/>
<path d="M583 106h9v15c0 1-9 1-9 0zM583 106c0-2 9-2 9 0s-9 2-9 0" fill="#fff" stroke="#2b7fc4" stroke-width="1.200"/>
<path d="M576 130v5c0 3 5 3 5 0v-5zM574.500 130h8M576.500 130v-3M580 130v-3M578.500 138v6" fill="none" stroke="#1a8a80" stroke-width="1.300"/>
<path d="M583 131h11v16h-16v-4" fill="none" stroke="#333" stroke-width="1.400"/><path d="M585 135h7M585 139h7M585 143h7" stroke="#444" stroke-width="1.300"/>
<path d="M577 200h13v14h-13z" fill="#f6f6f6" stroke="#444" stroke-width="1.400"/><path d="M576 216h15" stroke="#444" stroke-width="1.200" stroke-dasharray="1 1"/>
<use href="#gear" x="584" y="511"/>

<!-- NuGet submenu -->
<rect x="961" y="265" width="373" height="92" fill="#000" fill-opacity=".38" filter="url(#sh)"/>
<rect x="957.500" y="261.500" width="372" height="91" fill="#f6f6f6" stroke="#cccedb"/>
<rect x="962" y="265.500" width="363" height="27" fill="#c9def5" stroke="#0071c1" stroke-width="1.400"/>
<text x="1001" y="285" textLength="174" lengthAdjust="spacingAndGlyphs">Package Manager Console</text>
<text x="1001" y="313" textLength="255" lengthAdjust="spacingAndGlyphs">Manage NuGet Packages for Solution...</text>
<text x="1001" y="341" textLength="174" lengthAdjust="spacingAndGlyphs">Package Manager Settings</text>
<path d="M968.500 271h15.500v16h-15.500zM968.500 275h15.500" fill="none" stroke="#333" stroke-width="1.300"/><path d="M971 279l2 2-2 2M974 284h4" fill="none" stroke="#333" stroke-width="1"/>
<circle cx="978" cy="309" r="7" fill="#0e4a84"/><circle cx="975.500" cy="306" r="2" fill="#f6f6f6"/><circle cx="980" cy="312" r="2.700" fill="#f6f6f6"/><circle cx="969" cy="300" r="1.500" fill="#0e4a84"/>
<use href="#gear" x="976" y="335"/>
</svg>
</body></html>
